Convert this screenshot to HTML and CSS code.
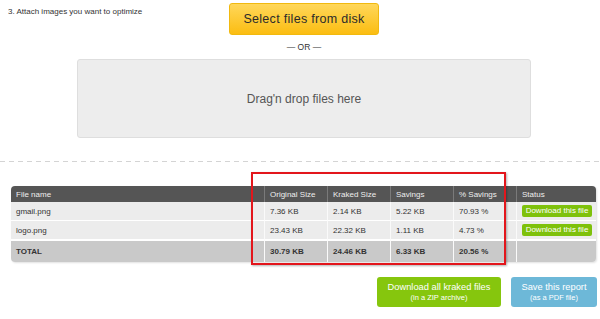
FILE: index.html
```html
<!DOCTYPE html>
<html lang="en">
<head>
    <meta charset="UTF-8">
    <meta name="viewport" content="width=device-width, initial-scale=1.0">
    <title>Kraken - Web Interface</title>
    <link rel="stylesheet" href="styles.css">
</head>
<body>

    <!-- Upload area -->
    <div class="upload">
        <p class="step">3. Attach images you want to optimize</p>
        <button class="select-btn">Select files from disk</button>
        <div class="or">&mdash; OR &mdash;</div>
        <div class="dropzone">Drag'n drop files here</div>
    </div>

    <div class="divider"></div>

    <!-- Results table -->
    <div class="results">
        <table class="results-table">
            <colgroup>
                <col class="col-name">
                <col class="col-num">
                <col class="col-num">
                <col class="col-num">
                <col class="col-num">
                <col class="col-status">
            </colgroup>
            <thead>
                <tr>
                    <th>File name</th>
                    <th>Original Size</th>
                    <th>Kraked Size</th>
                    <th>Savings</th>
                    <th>% Savings</th>
                    <th>Status</th>
                </tr>
            </thead>
            <tbody>
                <tr>
                    <td>gmail.png</td>
                    <td>7.36 KB</td>
                    <td>2.14 KB</td>
                    <td>5.22 KB</td>
                    <td>70.93 %</td>
                    <td><a href="#" class="file-btn">Download this file</a></td>
                </tr>
                <tr>
                    <td>logo.png</td>
                    <td>23.43 KB</td>
                    <td>22.32 KB</td>
                    <td>1.11 KB</td>
                    <td>4.73 %</td>
                    <td><a href="#" class="file-btn">Download this file</a></td>
                </tr>
                <tr class="total">
                    <td>TOTAL</td>
                    <td>30.79 KB</td>
                    <td>24.46 KB</td>
                    <td>6.33 KB</td>
                    <td>20.56 %</td>
                    <td></td>
                </tr>
            </tbody>
        </table>
        <!-- red marker drawn over the size columns -->
        <div class="highlight"></div>
    </div>

    <div class="actions">
        <a href="#" class="action-btn zip-btn">Download all kraked files<span>(in a ZIP archive)</span></a>
        <a href="#" class="action-btn pdf-btn">Save this report<span>(as a PDF file)</span></a>
    </div>

</body>
</html>
```

FILE: styles.css
```css
/* Basic styling */
body {
    font-family: "Liberation Sans", Arial, sans-serif;
    margin: 0;
    padding: 0;
    background-color: #fff;
    color: #333;
}
/* Upload area */
.upload {
    display: grid;
    grid-template-columns: 77px 454px;
}
.step {
    grid-column: 1;
    grid-row: 1;
    margin: 0;
    padding: 7px 0 0 8px;
    font-size: 8px;
    white-space: nowrap;
    color: #333;
}
.select-btn {
    grid-column: 2;
    grid-row: 1;
    justify-self: center;
    margin-top: 3px;
    width: 150px;
    height: 32px;
    font-family: "Liberation Sans", Arial, sans-serif;
    font-size: 12.5px;
    letter-spacing: 0.3px;
    color: #2b2b2b;
    background: linear-gradient(#ffd75a, #fbbd12);
    border: 1px solid #f1b90f;
    border-radius: 3px;
    cursor: pointer;
}
.or {
    grid-column: 2;
    margin-top: 5px;
    line-height: 14px;
    font-size: 8.5px;
    text-align: center;
    color: #333;
}
.dropzone {
    grid-column: 2;
    margin-top: 5px;
    height: 77px;
    display: flex;
    align-items: center;
    justify-content: center;
    background-color: #ededed;
    border: 1px solid #dedede;
    border-radius: 3px;
    font-size: 12px;
    color: #555;
}
.divider {
    margin-top: 23px;
    height: 1px;
    background: repeating-linear-gradient(to right, #d4d4d4 0 5px, transparent 5px 9px);
}
/* Results table */
.results {
    position: relative;
    margin: 24px 4px 0 11px;
}
.results-table {
    width: 585px;
    table-layout: fixed;
    border-spacing: 0;
    font-size: 8px;
    box-shadow: 1px 1px 2px rgba(0, 0, 0, 0.12);
    border-radius: 4px;
}
.col-name {
    width: 253px;
}
.col-num {
    width: 63px;
}
.col-status {
    width: 80px;
}
.results-table th {
    height: 16px;
    padding: 0 5px;
    background-color: #555;
    color: #eee;
    font-weight: normal;
    text-align: left;
    border-left: 1px solid #7a7a7a;
}
.results-table th:first-child {
    border-left: none;
    border-top-left-radius: 4px;
}
.results-table th:last-child {
    border-top-right-radius: 4px;
}
.results-table td {
    height: 18px;
    padding: 0 5px;
    background-color: #ececec;
    border-left: 1px solid #fafafa;
    border-bottom: 1px solid #fff;
    color: #333;
}
.results-table td:first-child {
    border-left: none;
}
.results-table .total td {
    height: 21px;
    background-color: #c9c9c9;
    font-weight: bold;
    border-top: 1px solid #fff;
    border-bottom: none;
}
.results-table .total td:first-child {
    border-bottom-left-radius: 4px;
}
.results-table .total td:last-child {
    border-bottom-right-radius: 4px;
}
.file-btn {
    display: block;
    width: 70px;
    height: 12px;
    line-height: 12px;
    text-align: center;
    background-color: #7ec10b;
    color: #fff;
    text-decoration: none;
    border-radius: 2px;
    font-size: 8px;
}
.highlight {
    position: absolute;
    left: 240px;
    top: -14px;
    width: 251px;
    height: 89px;
    border: 2px solid #e3161c;
    box-shadow: 1px 1px 2px rgba(0, 0, 0, 0.3);
}
/* Bottom buttons */
.actions {
    display: flex;
    justify-content: flex-end;
    gap: 10px;
    margin: 15px 3px 0 0;
}
.action-btn {
    display: flex;
    flex-direction: column;
    justify-content: center;
    align-items: center;
    height: 30px;
    border-radius: 3px;
    color: #fff;
    text-decoration: none;
    font-size: 9.3px;
    line-height: 11px;
}
.action-btn span {
    font-size: 7.5px;
    line-height: 9px;
}
.zip-btn {
    width: 124px;
    background-color: #86c60d;
}
.pdf-btn {
    width: 86px;
    background-color: #6db8d8;
}
```
